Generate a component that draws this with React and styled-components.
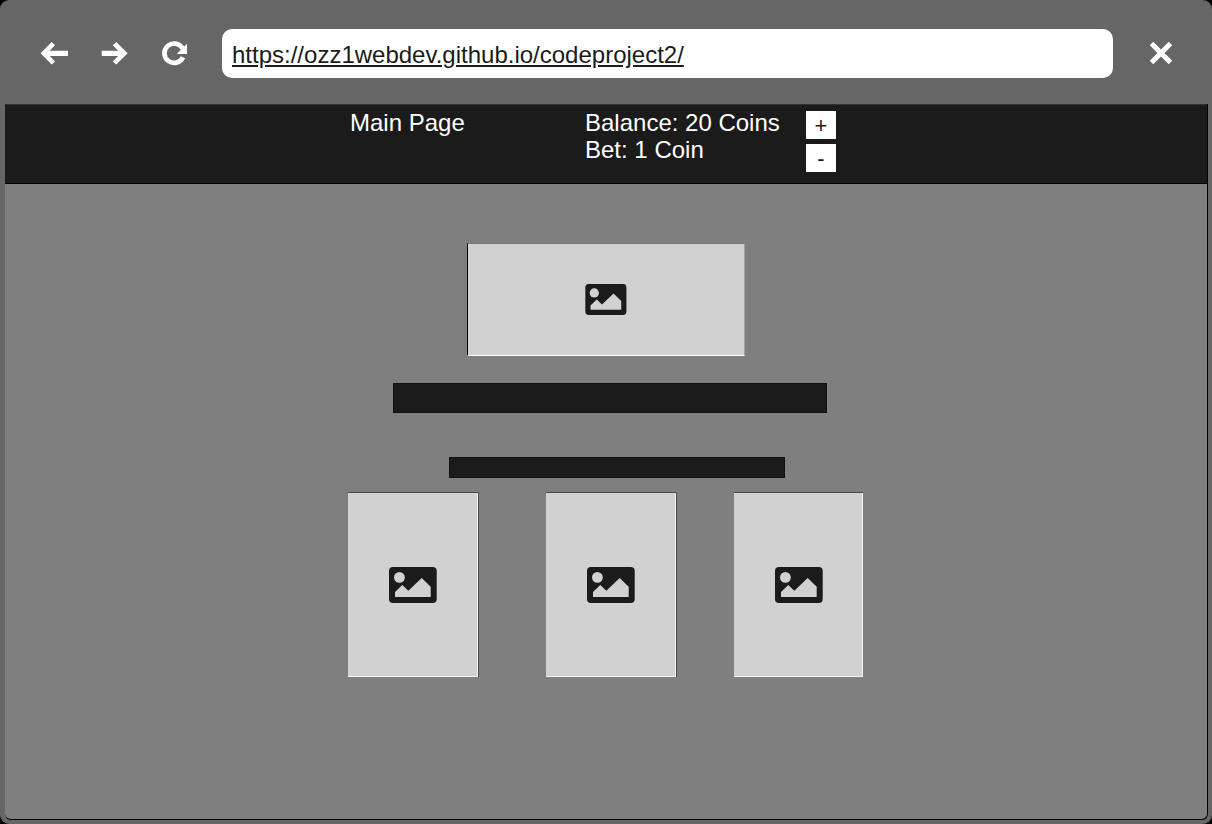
import React from "react";
import styled, { createGlobalStyle } from "styled-components";

const GlobalStyle = createGlobalStyle`
  *, *::before, *::after { box-sizing: border-box; }
  body {
    margin: 0;
    background: #000;
    font-family: "Liberation Sans", Arial, sans-serif;
  }
`;

const Window = styled.div`
  display: flex;
  flex-direction: column;
  min-height: 100vh;
  padding: 0 4px 4px 5px;
  background: #666;
  border-radius: 9px;
`;

const Toolbar = styled.header`
  display: flex;
  align-items: center;
  padding: 29px 27px 26px 29px;
`;

const IconButton = styled.button`
  display: flex;
  flex: none;
  align-items: center;
  justify-content: center;
  width: 40px;
  height: 40px;
  margin-right: ${(p) => p.$gap || 0}px;
  padding: 0;
  border: 0;
  background: none;
  color: #fff;
  cursor: pointer;

  svg { display: block; }
`;

const Address = styled.input`
  flex: 1;
  min-width: 0;
  height: 49px;
  margin: 0 28px 0 28px;
  padding: 3px 10px 0;
  border: 0;
  border-radius: 10px;
  background: #fff;
  color: #1b1b1b;
  font: 24px "Liberation Sans", Arial, sans-serif;
  text-decoration: underline;
`;

const Page = styled.div`
  display: flex;
  flex: 1;
  flex-direction: column;
  border: solid #000;
  border-width: 0 1px 1px 0;
  border-radius: 0 0 6px 6px;
  background: #7f7f7f;
`;

const NavBar = styled.nav`
  display: flex;
  justify-content: center;
  height: 80px;
  border-top: 1px solid #333;
  border-bottom: 1px solid #000;
  background: #1b1b1b;
`;

const NavGrid = styled.div`
  display: grid;
  grid-template-columns: 235px 221px 1fr;
  align-items: start;
  width: 516px;
  padding: 4px 0 0 2px;
  color: #fff;
  font-size: 24px;
  line-height: 27px;
`;

const NavLink = styled.a`
  color: inherit;
  text-decoration: none;
`;

const Stat = styled.div`
  white-space: nowrap;
`;

const BetControls = styled.div`
  display: grid;
  gap: 5px;
  justify-items: start;
  padding-top: 2px;
`;

const BetButton = styled.button`
  width: 30px;
  height: 28px;
  padding: 1px 0 0;
  border: 0;
  background: #fff;
  color: #1b1b1b;
  font: 22px/27px "Liberation Sans", Arial, sans-serif;
  cursor: pointer;
`;

const Content = styled.main`
  display: flex;
  flex-direction: column;
  width: 516px;
  margin: 0 auto;
  padding: 59px 0 60px;
`;

const Picture = styled.div`
  display: flex;
  align-items: center;
  justify-content: center;
  background: #d1d1d1;
`;

const Hero = styled(Picture)`
  align-self: center;
  width: 278px;
  height: 113px;
  border: 1px solid;
  border-color: #767676 #a0a0a0 #fff #000;
`;

const Bar = styled.div`
  width: ${(p) => p.$width}px;
  height: ${(p) => p.$height}px;
  margin: ${(p) => p.$top}px 0 0 ${(p) => p.$left}px;
  background: #1b1b1b;
  border: 1px solid #101010;
`;

const Cards = styled.div`
  display: grid;
  grid-template-columns: 198px 188px 130px;
  margin-top: 14px;
`;

const Card = styled(Picture)`
  width: 131px;
  height: 185px;
  border-top: 1px solid #4b4b4b;
  border-right: 1px solid #4b4b4b;
  box-shadow: inset -1px -1px #f4f4f4;

  &:last-child {
    width: 129px;
    border-right: 0;
  }
`;

function BackIcon() {
  return (
    <svg width="28" height="23" viewBox="0 0 28 23" fill="currentColor" aria-hidden="true">
      <path d="M.5 11.3 11.7 0 15 3.2 9.7 8.7H28V14H9.7l5.3 5.4-3.3 3.2z" />
    </svg>
  );
}

function ForwardIcon() {
  return (
    <svg width="28" height="23" viewBox="0 0 28 23" fill="currentColor" aria-hidden="true">
      <path d="M27.7 11.3 16.3 0l-3.6 3.2 5.5 5.5H1.7V14h16.5l-5.5 5.4 3.6 3.2z" />
    </svg>
  );
}

function ReloadIcon() {
  return (
    <svg width="26" height="25" viewBox="0 0 26 25" aria-hidden="true">
      <path
        d="M21.8 7.8A9.7 9.7 0 1 0 22 16.2"
        fill="none"
        stroke="currentColor"
        strokeWidth="4.7"
      />
      <path d="M26 2.7V13H15.7z" fill="currentColor" />
    </svg>
  );
}

function CloseIcon() {
  return (
    <svg width="24" height="24" viewBox="0 0 24 24" aria-hidden="true">
      <path
        d="m2.5 1.5 19 19m0-19-19 19"
        fill="none"
        stroke="currentColor"
        strokeWidth="5"
      />
    </svg>
  );
}

function ImageIcon({ width = 48, height = 36 }) {
  return (
    <svg width={width} height={height} viewBox="0 0 48 36" role="img" aria-label="Image">
      <rect width="47.7" height="36" rx="4" fill="#1b1b1b" />
      <circle cx="10.4" cy="10.4" r="5.4" fill="#d1d1d1" />
      <path d="M6 29.9V25l7.3-7 6 5.8L32.7 11l9 8.7v10.2z" fill="#d1d1d1" />
    </svg>
  );
}

export default function App() {
  return (
    <>
      <GlobalStyle />
      <Window>
        <Toolbar>
          <IconButton type="button" aria-label="Back" $gap={20}><BackIcon /></IconButton>
          <IconButton type="button" aria-label="Forward" $gap={20}><ForwardIcon /></IconButton>
          <IconButton type="button" aria-label="Reload"><ReloadIcon /></IconButton>
          <Address
            type="text"
            aria-label="Address"
            defaultValue="https://ozz1webdev.github.io/codeproject2/"
          />
          <IconButton type="button" aria-label="Close"><CloseIcon /></IconButton>
        </Toolbar>
        <Page>
          <NavBar>
            <NavGrid>
              <NavLink href="#main">Main Page</NavLink>
              <div>
                <Stat>Balance: 20 Coins</Stat>
                <Stat>Bet: 1 Coin</Stat>
              </div>
              <BetControls>
                <BetButton type="button" aria-label="Raise bet">+</BetButton>
                <BetButton type="button" aria-label="Lower bet">-</BetButton>
              </BetControls>
            </NavGrid>
          </NavBar>
          <Content id="main">
            <Hero><ImageIcon width={42} height={31} /></Hero>
            <Bar $width={434} $height={30} $top={27} $left={45} />
            <Bar $width={336} $height={21} $top={44} $left={101} />
            <Cards>
              <Card><ImageIcon /></Card>
              <Card><ImageIcon /></Card>
              <Card><ImageIcon /></Card>
            </Cards>
          </Content>
        </Page>
      </Window>
    </>
  );
}
